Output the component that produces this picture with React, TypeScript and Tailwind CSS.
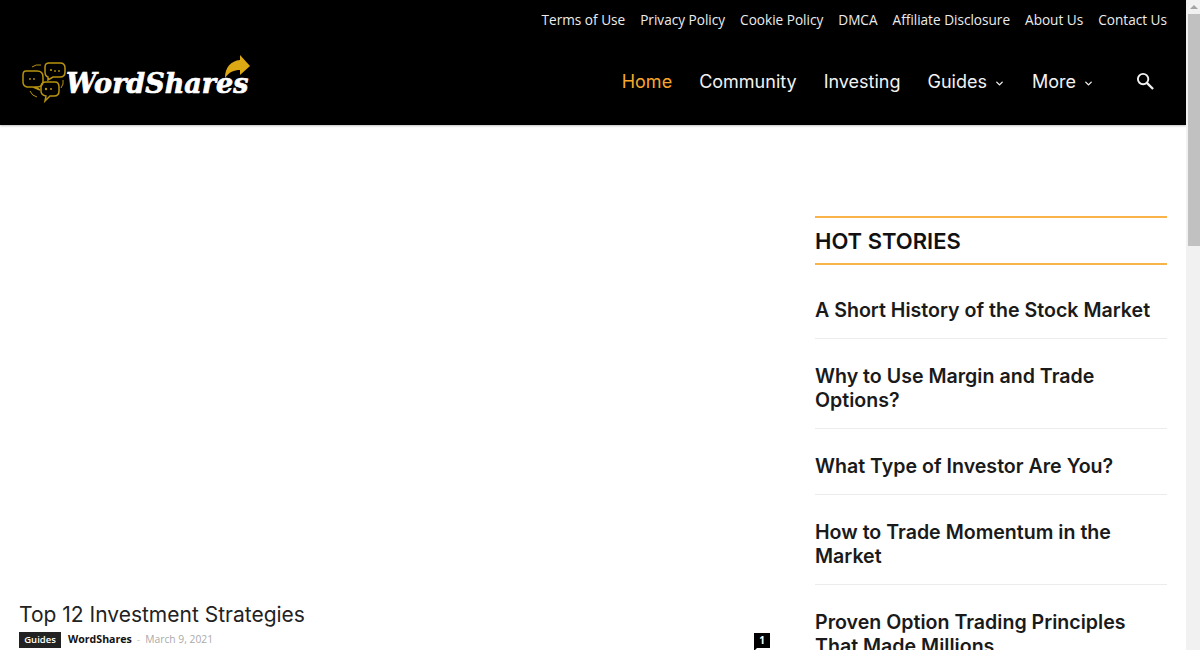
import { ChevronDown } from "lucide-react";

const topLinks = ["Terms of Use", "Privacy Policy", "Cookie Policy", "DMCA", "Affiliate Disclosure", "About Us", "Contact Us"];

const stories = [
  "A Short History of the Stock Market",
  "Why to Use Margin and Trade Options?",
  "What Type of Investor Are You?",
  "How to Trade Momentum in the Market",
  "Proven Option Trading Principles That Made Millions",
];

function Logo() {
  return (
    <div className="flex items-end relative w-[230px] h-[50px] ml-[1px]">
      <svg width="44" height="42" viewBox="0 0 44 42" fill="none" stroke="#b8930f" strokeWidth="1.5" className="shrink-0 mb-[1px]">
        <path d="M4 9h11q6 0 6 6v4q0 6-6 6h-1l4 3-7-3H5q-4-1-4-5v-7q0-4 3-4z" />
        <path d="M26 1h12q5 0 5 5v4q0 5-5 5H31l-5 3v-3q-3-1-3-5V5q0-4 4-4z" />
        <path d="M24 20h9q4 0 4 5v4q0 5-5 5h-4l-5 5 1-5q-5-1-5-5v-4q0-5 5-5z" />
        <path d="M10 5q4-3 9-2M8 29q2 5 7 6M41 18q1 4-2 8" strokeWidth="1" />
        <g fill="#b8930f" stroke="none">
          <circle cx="8" cy="17" r="0.9" /><circle cx="12" cy="17" r="0.9" />
          <circle cx="29" cy="8" r="1.1" /><circle cx="33" cy="9" r="0.9" /><circle cx="37" cy="9" r="0.9" />
          <circle cx="24" cy="27" r="1.2" /><circle cx="29" cy="27" r="1" />
        </g>
      </svg>
      <span className="font-['DejaVu_Serif',serif] font-bold italic text-[27px] leading-none text-white [-webkit-text-stroke:0.7px_white] mb-[8px]">
        WordShares
      </span>
      <svg width="26" height="23" viewBox="0 0 26 23" className="absolute right-[1px] top-0" fill="#dca814">
        <path d="M0 23C0 12 6 6 15 5V0l10 11-10 9v-5C9 15 4 17 0 23z" />
      </svg>
    </div>
  );
}

function NavItem({ label, active, caret }: { label: string; active?: boolean; caret?: boolean }) {
  return (
    <a className={`flex items-center text-[18px] leading-[26px] ${active ? "text-[#f9a72c]" : "text-[#f2f2f2]"}`}>
      {label}
      {caret && <ChevronDown size={11} strokeWidth={3} className="ml-[7px] mt-[2px]" />}
    </a>
  );
}

export default function App() {
  return (
    <div className="flex w-[1200px] h-[650px] overflow-hidden bg-white font-['Inter',sans-serif]">
      <div className="w-[1186px] shrink-0 flex flex-col">
        {/* Header */}
        <header className="h-[125px] bg-black flex flex-col shrink-0 pr-[19px] pl-[21px] shadow-[0_1px_2px_rgba(0,0,0,0.25)]">
          <div className="flex justify-end gap-[15px] pt-[10px] font-['Open_Sans',sans-serif] text-[13.6px] leading-[19px] text-[#ececec]">
            {topLinks.map((l) => (
              <a key={l}>{l}</a>
            ))}
          </div>
          <div className="flex items-center justify-between mt-[26px]">
            <Logo />
            <nav className="flex items-center gap-[27px] mr-[13px] mt-[4px]">
              <NavItem label="Home" active />
              <NavItem label="Community" />
              <NavItem label="Investing" />
              <NavItem label="Guides" caret />
              <NavItem label="More" caret />
              <svg width="18" height="18" viewBox="0 0 19 19" fill="none" stroke="#f2f2f2" strokeWidth="2" className="ml-[15px] mb-[2px]">
                <circle cx="7.5" cy="7.5" r="5.5" />
                <path d="M11.5 11.5 18 18" strokeWidth="2.4" />
              </svg>
            </nav>
          </div>
        </header>

        {/* Content */}
        <div className="flex pl-[19px] pr-[19px] flex-1 min-h-0">
          <main className="w-[751px] shrink-0 pt-[477px]">
            <h2 className="text-[21px] leading-[26px] text-[#222]">Top 12 Investment Strategies</h2>
            <div className="flex items-center mt-[4px] h-[16px] font-['Open_Sans',sans-serif]">
              <span className="bg-[#222] text-white text-[9.5px] font-semibold h-[16px] leading-[16px] w-[42px] text-center">Guides</span>
              <span className="ml-[7px] text-[10.6px] font-bold text-[#111]">WordShares</span>
              <span className="ml-[5px] text-[10.5px] text-[#ccc]">-</span>
              <span className="ml-[5px] text-[10.3px] text-[#aaa]">March 9, 2021</span>
              <span className="ml-auto relative bg-black text-white text-[10px] font-bold w-[16px] h-[15px] leading-[15px] text-center">
                1
                <span className="absolute left-0 top-full w-0 h-0 border-t-[3px] border-r-[3px] border-t-black border-r-transparent" />
              </span>
            </div>
          </main>
          <aside className="ml-[45px] w-[352px] pt-[91px]">
            <div className="border-y-2 border-[#f9b348] h-[49px] flex items-center">
              <h3 className="text-[22px] font-semibold text-[#111] leading-none">HOT STORIES</h3>
            </div>
            <div className="mt-[20px]">
              {stories.map((s) => (
                <div key={s} className="border-b border-[#ececec] pt-[13px] pb-[16px] mb-[12px] text-[19.6px] font-semibold leading-[24px] text-[#1a1a1a]">
                  {s}
                </div>
              ))}
            </div>
          </aside>
        </div>
      </div>

      {/* Scrollbar */}
      <div className="w-[14px] bg-[#f1f1f1] flex flex-col items-center pl-[2px]">
        <div className="h-[14px] flex items-center">
          <span className="w-0 h-0 border-x-[4px] border-x-transparent border-b-[4px] border-b-[#a3a3a3]" />
        </div>
        <div className="w-full h-[232px] bg-[#c1c1c1]" />
      </div>
    </div>
  );
}
